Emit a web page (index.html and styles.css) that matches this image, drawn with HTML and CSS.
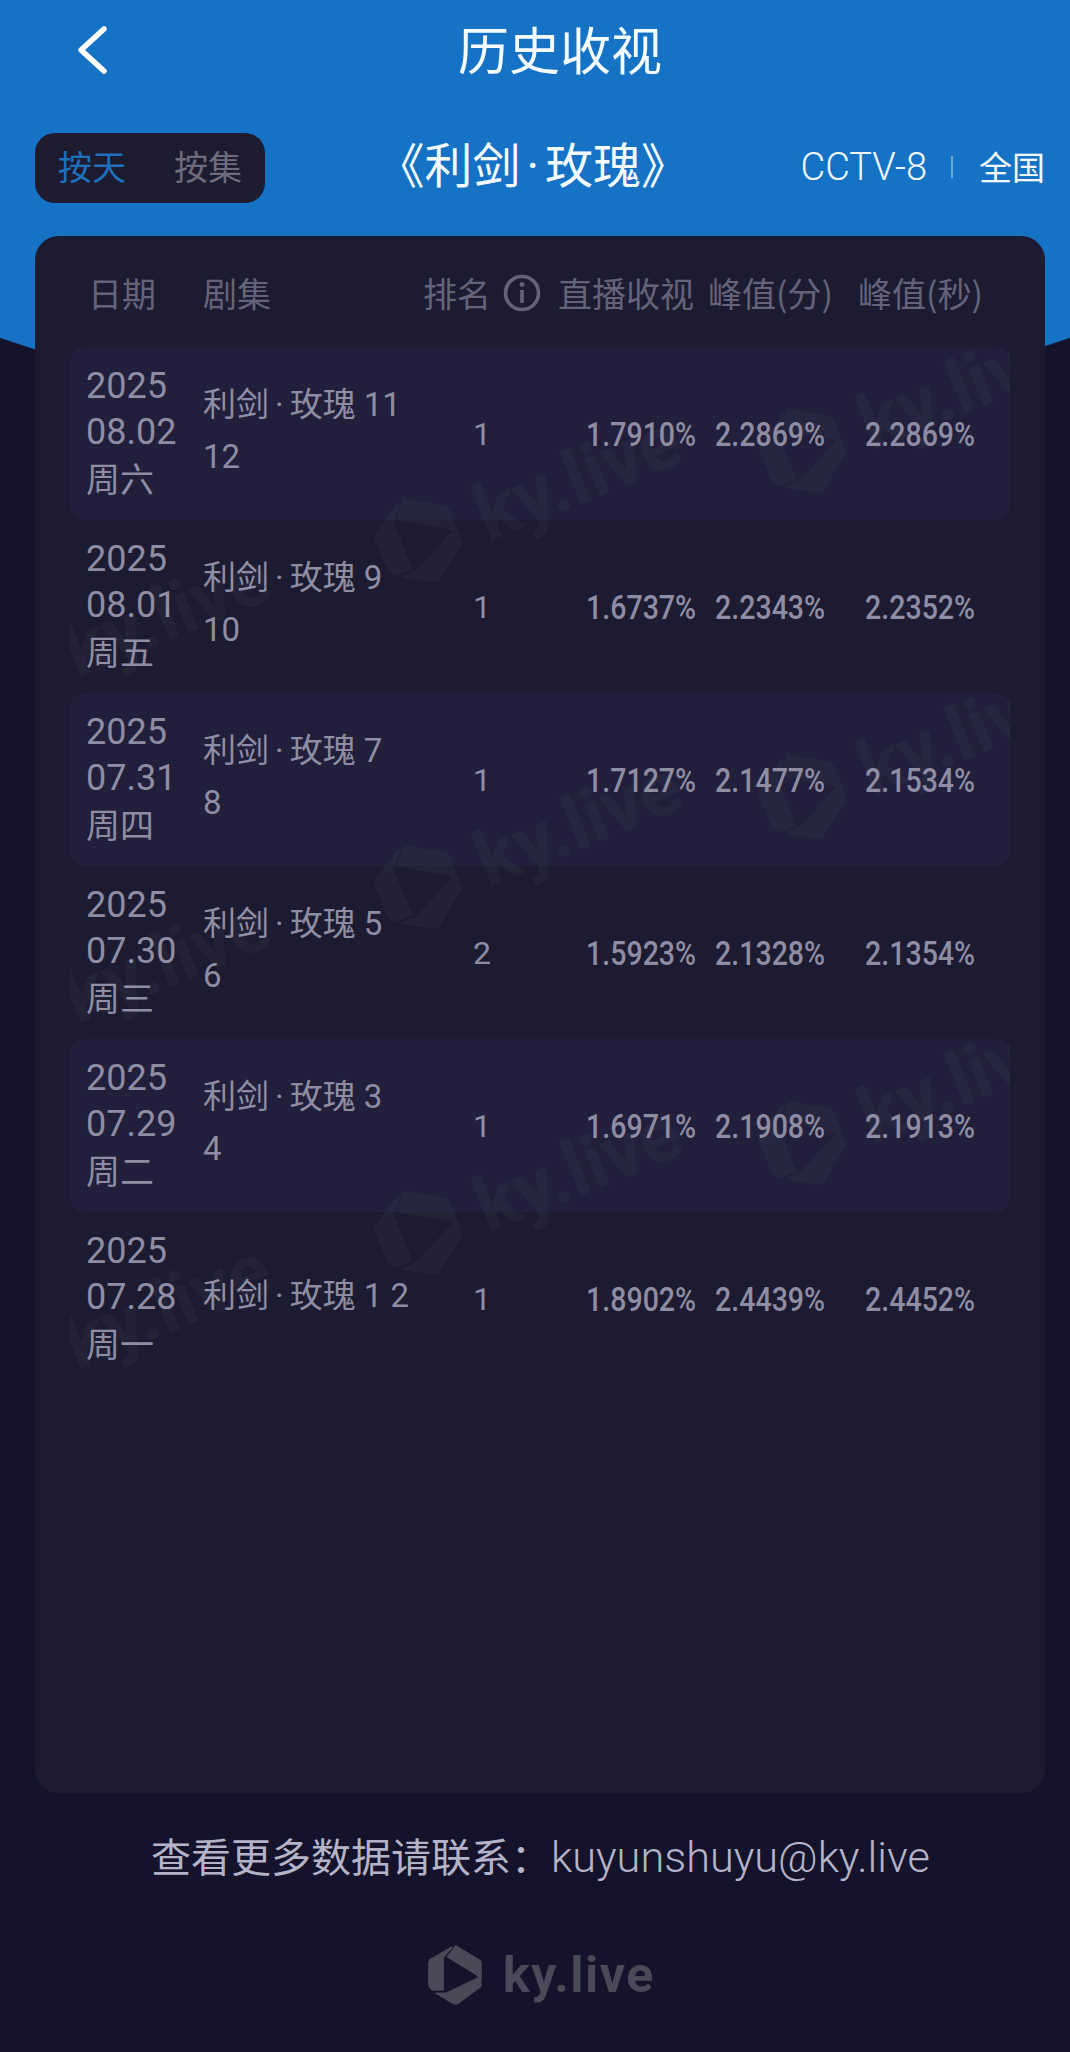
FILE: index.html
```html
<!DOCTYPE html>
<html lang="zh-CN">
<head>
<meta charset="utf-8">
<title>历史收视</title>
<link rel="stylesheet" href="styles.css">
</head>
<body>
<svg class="defs" width="0" height="0" aria-hidden="true">
  <defs>
    <g id="ky-mark" transform="scale(.3333) translate(-120 -125)">
      <path class="mark-piece" d="M110 42 45 80 42 86V158L52 170H84V72Z"/>
      <path class="mark-piece" d="M122 38 196 83 198 90V144L186 124 98 70Z"/>
      <path class="mark-piece" d="M190 134 198 154 196 160 127 211H118L64 180H94Z"/>
    </g>
    <g id="wm">
      <g transform="scale(1.5)"><use href="#ky-mark"/></g>
      <text x="64" y="26" class="wm-text">ky.live</text>
    </g>
  </defs>
</svg>
<div class="page">
  <header class="nav">
    <svg class="back" viewBox="0 0 30 48" width="30" height="48"><path d="M27 3 4 24 27 45" /></svg>
    <h1 class="nav-title">历史收视</h1>
  </header>
  <div class="toolbar">
    <div class="toggle"><span class="on">按天</span><span>按集</span></div>
    <div class="show">《利剑<span class="mid">·</span>玫瑰》</div>
    <div class="meta"><span class="channel">CCTV-8</span><i class="sep"></i><span class="region">全国</span></div>
  </div>
  <main class="card">
    <div class="grid head">
      <span>日期</span>
      <span>剧集</span>
      <span class="rank-head">排名<svg class="info" viewBox="0 0 38 38" width="38" height="38"><circle cx="19" cy="19" r="16.5"/><path d="M19 16V29"/><circle class="dot" cx="19" cy="10.5" r="2.4"/></svg></span>
      <span>直播收视</span>
      <span>峰值(分)</span>
      <span>峰值(秒)</span>
    </div>
    <div class="rows">
      <svg class="watermark" viewBox="70 347 940 1038" width="940" height="1038" aria-hidden="true">
        <use href="#wm" transform="translate(419 541) rotate(-22)"/>
        <use href="#wm" transform="translate(419 887) rotate(-22)"/>
        <use href="#wm" transform="translate(419 1233) rotate(-22)"/>
        <use href="#wm" transform="translate(803 451) rotate(-22)"/>
        <use href="#wm" transform="translate(803 797) rotate(-22)"/>
        <use href="#wm" transform="translate(803 1143) rotate(-22)"/>
        <use href="#wm" transform="translate(8 678) rotate(-22)"/>
        <use href="#wm" transform="translate(8 1024) rotate(-22)"/>
        <use href="#wm" transform="translate(8 1370) rotate(-22)"/>
      </svg>
      <div class="grid row tint">
        <div class="date">2025<br>08.02<br><span class="cjk">周六</span></div>
        <div class="ep">利剑<span class="mid">·</span>玫瑰 11<br>12</div>
        <div class="rank">1</div><div class="pct live">1.7910%</div><div class="pct p1">2.2869%</div><div class="pct p2">2.2869%</div>
      </div>
      <div class="grid row">
        <div class="date">2025<br>08.01<br><span class="cjk">周五</span></div>
        <div class="ep">利剑<span class="mid">·</span>玫瑰 9<br>10</div>
        <div class="rank">1</div><div class="pct live">1.6737%</div><div class="pct p1">2.2343%</div><div class="pct p2">2.2352%</div>
      </div>
      <div class="grid row tint">
        <div class="date">2025<br>07.31<br><span class="cjk">周四</span></div>
        <div class="ep">利剑<span class="mid">·</span>玫瑰 7<br>8</div>
        <div class="rank">1</div><div class="pct live">1.7127%</div><div class="pct p1">2.1477%</div><div class="pct p2">2.1534%</div>
      </div>
      <div class="grid row">
        <div class="date">2025<br>07.30<br><span class="cjk">周三</span></div>
        <div class="ep">利剑<span class="mid">·</span>玫瑰 5<br>6</div>
        <div class="rank">2</div><div class="pct live">1.5923%</div><div class="pct p1">2.1328%</div><div class="pct p2">2.1354%</div>
      </div>
      <div class="grid row tint">
        <div class="date">2025<br>07.29<br><span class="cjk">周二</span></div>
        <div class="ep">利剑<span class="mid">·</span>玫瑰 3<br>4</div>
        <div class="rank">1</div><div class="pct live">1.6971%</div><div class="pct p1">2.1908%</div><div class="pct p2">2.1913%</div>
      </div>
      <div class="grid row">
        <div class="date">2025<br>07.28<br><span class="cjk">周一</span></div>
        <div class="ep">利剑<span class="mid">·</span>玫瑰 1 2</div>
        <div class="rank">1</div><div class="pct live">1.8902%</div><div class="pct p1">2.4439%</div><div class="pct p2">2.4452%</div>
      </div>
    </div>
  </main>
  <p class="contact">查看更多数据请联系：<span class="mail">kuyunshuyu@ky.live</span></p>
  <div class="brand">
    <svg class="brand-mark" viewBox="-28 -31 56 62" width="56" height="62"><use href="#ky-mark"/></svg>
    <span>ky.live</span>
  </div>
</div>
</body>
</html>
```
FILE: styles.css
```css
* { box-sizing: border-box; }
html, body { margin: 0; padding: 0; }
body {
  background: #14132b;
  font-family: "Roboto", "Noto Sans CJK SC", sans-serif;
}
.defs { display: block; height: 0; }
.mark-piece { stroke: currentColor; stroke-width: 5; stroke-linejoin: round; }
.mid { margin: 0 6px; }
.page {
  width: 1070px;
  height: 2052px;
  overflow: hidden;
  display: flex;
  flex-direction: column;
  background: radial-gradient(ellipse 900px 421px at 535px 0, #1672c4 99.7%, #14132b 100%);
}
.nav {
  height: 100px;
  display: flex;
  align-items: center;
  padding-left: 77px;
}
.back { fill: none; stroke: #fff; stroke-width: 5.5; stroke-linecap: round; stroke-linejoin: round; }
.nav-title {
  margin: 0 0 0 351px;
  padding-bottom: 4px;
  font: 400 51px/1 "Noto Sans CJK SC", sans-serif;
  color: #f4fbff;
}
.toolbar {
  height: 70px;
  margin-top: 33px;
  display: flex;
  align-items: center;
  justify-content: space-between;
  padding: 0 25px 0 35px;
}
.toggle {
  width: 230px;
  height: 70px;
  border-radius: 20px;
  background: #1c1b30;
  display: flex;
  align-items: center;
  gap: 48px;
  padding: 0 0 4px 23px;
  font: 400 34px/1 "Noto Sans CJK SC", sans-serif;
  color: #6e6c7c;
}
.toggle .on { color: #1e6fbd; }
.show {
  padding-bottom: 3px;
  font: 400 48px/1 "Roboto", "Noto Sans CJK SC", sans-serif;
  color: #f4fbff;
}
.meta { display: flex; align-items: center; color: #f0f8ff; padding-bottom: 3px; }
.channel { font: 300 38px/1 "Roboto", sans-serif; }
.sep { width: 2px; height: 22px; margin: 0 26px 0 24px; background: #6aa6da; }
.region { font: 400 33px/1 "Noto Sans CJK SC", sans-serif; }
.card {
  margin: 33px 0 0 35px;
  width: 1010px;
  height: 1557px;
  border-radius: 24px;
  background: #1c1b31;
  padding: 0 35px;
}
.grid {
  display: grid;
  grid-template-columns: 133px 220px 135px 150px 150px 152px;
  align-items: center;
}
.head {
  height: 111px;
  padding-top: 3px;
  font: 400 34px/1 "Noto Sans CJK SC", sans-serif;
  color: #65637a;
}
.head > span:first-child { padding-left: 18px; }
.rank-head { display: flex; align-items: center; gap: 12px; }
.info { fill: none; stroke: #65637a; stroke-width: 3.6; }
.info .dot { fill: #65637a; stroke: none; }
.rows { position: relative; }
.watermark { position: absolute; left: 0; top: 0; pointer-events: none; fill: #fff; color: #fff; opacity: .028; }
.wm-text { font: 700 76px "Roboto", sans-serif; }
.row {
  height: 173px;
  border-radius: 14px;
  color: #8f8da3;
}
.tint { background: #211f3b; }
.date {
  padding-left: 16px;
  font: 400 36px/46px "Roboto", sans-serif;
  white-space: nowrap;
}
.cjk { font: 400 34px/46px "Noto Sans CJK SC", sans-serif; vertical-align: 2px; }
.ep {
  padding-bottom: 5px;
  font: 400 33px/52px "Roboto", "Noto Sans CJK SC", sans-serif;
  white-space: nowrap;
}
.rank { padding-left: 50px; font: 400 32px/1 "Roboto", sans-serif; }
.pct {
  justify-self: start;
  transform: scaleX(.84);
  transform-origin: left center;
  font: 500 34px/1 "Roboto", sans-serif;
  white-space: nowrap;
}
.live { margin-left: 28px; }
.p1, .p2 { margin-left: 7px; }
.contact {
  margin: 37px 0 0;
  padding-left: 151px;
  font: 400 40px/50px "Noto Sans CJK SC", sans-serif;
  color: #b5b3c8;
  white-space: nowrap;
}
.mail { font: 300 43.3px/50px "Roboto", sans-serif; }
.brand {
  margin: 61px 0 0 427px;
  display: flex;
  align-items: center;
  gap: 20px;
  color: #4a4958;
  fill: #4a4958;
  font: 700 50px/62px "Roboto", sans-serif;
  letter-spacing: 1.5px;
}
```
